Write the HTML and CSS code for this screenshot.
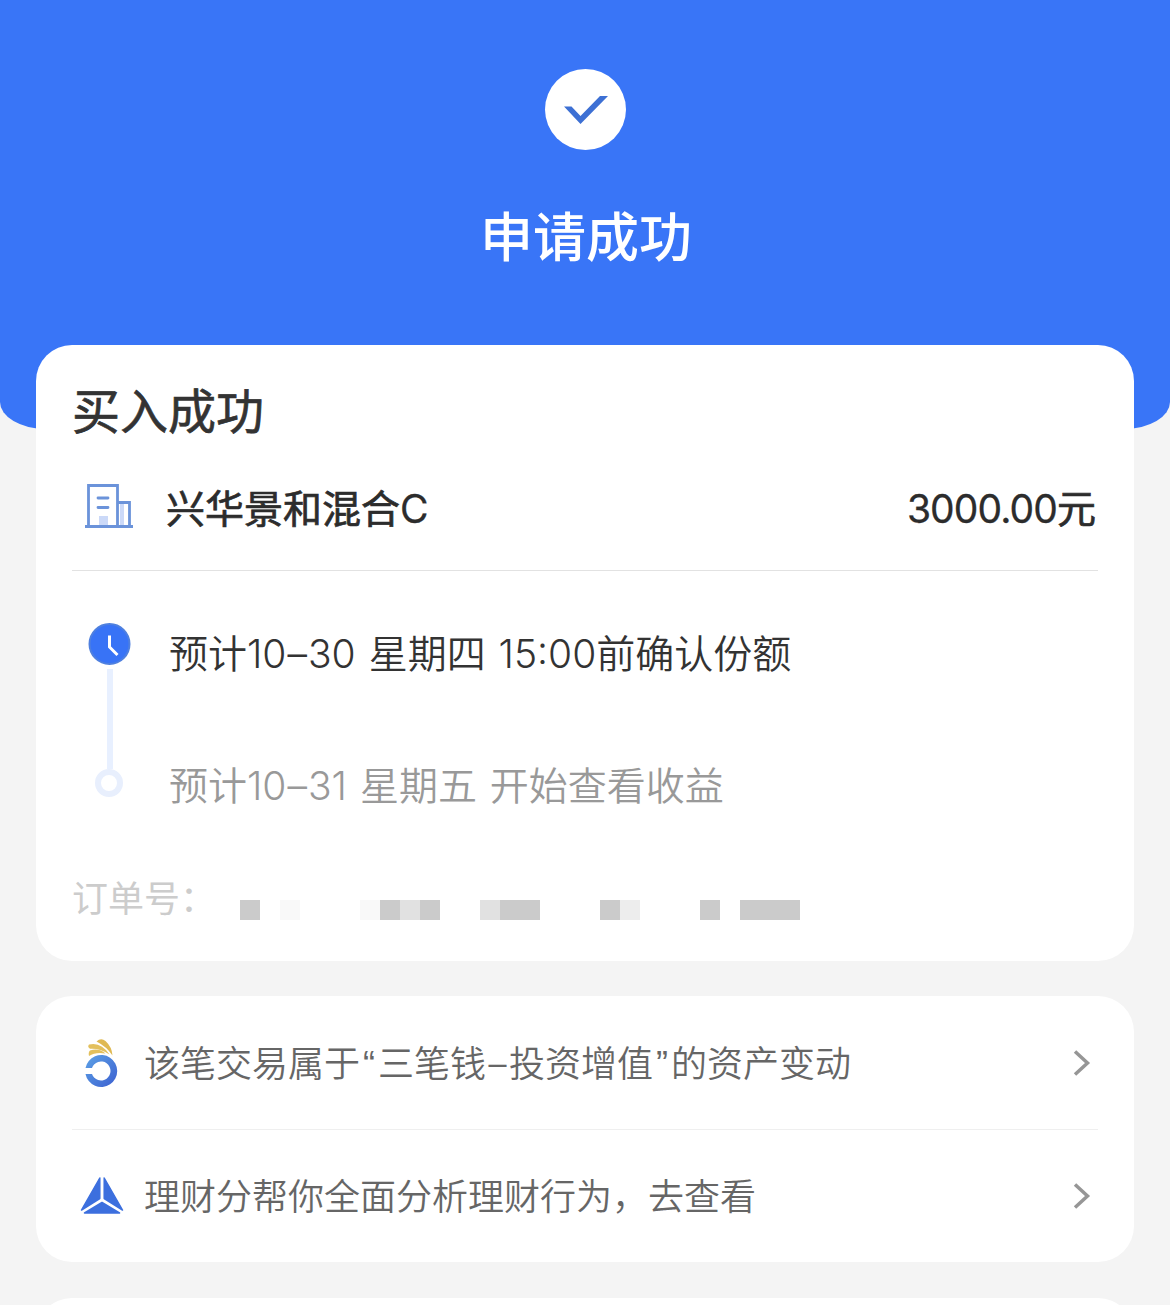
FILE: index.html
```html
<!DOCTYPE html>
<html lang="zh-CN">

<head>
    <meta charset="utf-8">
    <title>申请成功</title>
    <link rel="stylesheet" href="styles.css">
</head>

<body>
    <div class="page">
        <div class="hero">
            <svg class="hero-icon" width="82" height="82" viewBox="0 0 82 82">
                <circle cx="41.500" cy="40.500" r="40.500" fill="#fff" />
                <path d="M20 37.500h7.500l9 9.500L56 27h8L36.500 55z" fill="#3d70d4" />
            </svg>
            <h1 class="hero-title">申请成功</h1>
        </div>

        <div class="card order">
            <h2 class="order-title">买入成功</h2>
            <div class="fund">
                <svg class="fund-icon" width="50" height="46" viewBox="0 0 50 46">
                    <path d="M15 33h9v10h-9zM36 20h4v23h-4z" fill="#cbd9f8" />
                    <path d="M4.500 43V2.500h29V43M34 19.500h11.500V43M1 43.500h48" fill="none" stroke="#6b93da" stroke-width="2.800" />
                    <path d="M14 15h10M14 24.500h10" stroke="#6b93da" stroke-width="2.800" stroke-linecap="round" />
                </svg>
                <span class="fund-name">兴华景和混合<span class="latin">C</span></span>
                <span class="fund-amount"><span class="latin digits">3000.00</span>元</span>
            </div>
            <div class="steps">
                <div class="track">
                    <svg width="44" height="44" viewBox="0 0 44 44">
                        <circle cx="21.500" cy="22" r="20" fill="#3873f6" stroke="#4f80df" stroke-width="2" />
                        <path d="M21.500 13.500v11.500l8 8" fill="none" stroke="#fff" stroke-width="3" />
                    </svg>
                    <div class="track-line"></div>
                    <div class="track-dot"></div>
                </div>
                <div class="step-list">
                    <div class="step">预计10<span class="dash">–</span>30 星期四 15:00前确认份额</div>
                    <div class="step step-next">预计10<span class="dash">–</span>31 星期五 开始查看收益</div>
                </div>
            </div>
            <div class="number">
                <span class="number-label">订单号：</span>
                <div class="mask">
                    <i class="dark"></i><i></i><i class="faint"></i><i></i><i></i><i></i><i class="faint"></i>
                    <i class="dark"></i><i class="mid"></i><i class="dark"></i><i></i><i></i><i class="mid"></i><i class="dark"></i>
                    <i class="dark"></i><i></i><i></i><i></i><i class="dark"></i><i class="light"></i><i></i>
                    <i></i><i></i><i class="dark"></i><i></i><i class="dark"></i><i class="dark"></i><i class="dark"></i>
                </div>
            </div>
        </div>

        <div class="card links">
            <div class="link">
                <svg class="link-icon" width="44" height="50" viewBox="0 0 44 50">
                    <defs>
                        <linearGradient id="ring" x1="0" y1="0" x2="1" y2="1">
                            <stop offset="0" stop-color="#5da2e6" />
                            <stop offset="1" stop-color="#3b5fd0" />
                        </linearGradient>
                    </defs>
                    <path d="M5.500 30A16 16 0 1 1 5.500 36H12A9.500 9.500 0 1 0 12 30z" fill="url(#ring)" />
                    <path d="M16.500 3.500Q21 -.5 25.500 3Q32 9 32.500 17.500Q26.500 8.500 16.500 3.500z" fill="#dfb953" />
                    <path d="M9 6.500Q21 3.500 29.500 16.500Q20 10 10 10.800Q7 9 9 6.500z" fill="#e3c05d" />
                    <path d="M10 12.500Q19 9.500 25.500 15.500Q15 14 9 18Q8 14.500 10 12.500z" fill="#e3c05d" />
                </svg>
                <span class="link-text">该笔交易属于<span class="quote">“</span>三笔钱<span class="dash">–</span>投资增值<span class="quote">”</span>的资产变动</span>
                <svg class="arrow" width="18" height="26" viewBox="0 0 18 26">
                    <path d="M2 1.500L14.500 13L2 24.500" fill="none" stroke="#969696" stroke-width="3.500" />
                </svg>
            </div>
            <div class="link">
                <svg class="link-icon" width="44" height="38" viewBox="0 0 44 38">
                    <path d="M19.800 1V21.500L1.500 33zM24.200 1V21.500L42.500 33zM22 25.500L39.500 36h-35z" fill="#3c6fde" stroke="#3c6fde" stroke-width="1.500" stroke-linejoin="round" />
                </svg>
                <span class="link-text">理财分帮你全面分析理财行为，去查看</span>
                <svg class="arrow" width="18" height="26" viewBox="0 0 18 26">
                    <path d="M2 1.500L14.500 13L2 24.500" fill="none" stroke="#969696" stroke-width="3.500" />
                </svg>
            </div>
        </div>

        <div class="card more"></div>
    </div>
</body>

</html>
```
FILE: styles.css
```css
* {
    box-sizing: border-box;
}

body {
    margin: 0;
    background: #f4f4f4;
    color: #333;
    font-family: Inter, "Noto Sans CJK SC", sans-serif;
}

h1,
h2 {
    margin: 0;
}

.page {
    height: 1305px;
    overflow: hidden;
}

.hero {
    display: flex;
    flex-direction: column;
    align-items: center;
    height: 429px;
    padding-top: 69px;
    background: #3975f7;
    border-radius: 0 0 46px 46px / 0 0 27px 27px;
}

.hero-title {
    margin-top: 52px;
    padding-left: 2px;
    font-size: 53px;
    font-weight: 500;
    line-height: 70px;
    color: #fff;
}

.card {
    position: relative;
    margin: 0 36px 36px;
    padding: 0 36px;
    background: #fff;
    border-radius: 36px;
}

.order {
    height: 616px;
    margin-top: -84px;
    margin-bottom: 35px;
    padding-top: 37px;
}

.order-title {
    font-size: 48px;
    font-weight: 400;
    line-height: 60px;
    -webkit-text-stroke: 0.7px #333;
}

.fund {
    display: flex;
    align-items: center;
    height: 129px;
    padding: 0 2px 0 12px;
    border-bottom: 1px solid #e2e2e2;
    font-size: 39px;
    font-weight: 400;
    color: #2c2c2c;
    -webkit-text-stroke: 0.7px #2c2c2c;
}

.fund-name {
    flex: 1;
    margin-left: 32px;
}

.latin {
    -webkit-text-stroke: 0.3px #2c2c2c;
}

.digits {
    letter-spacing: -0.9px;
}

.steps {
    display: flex;
    height: 262px;
    padding-top: 51px;
}

.track {
    display: flex;
    flex-direction: column;
    align-items: center;
    width: 44px;
    margin: 0 37px 0 16px;
}

.track-line {
    width: 6px;
    height: 100px;
    margin-top: 3px;
    background: #e8f0ff;
}

.track-dot {
    width: 28px;
    height: 28px;
    margin-right: 3px;
    border: 6px solid #e8effd;
    border-radius: 50%;
}

.step {
    height: 132px;
    font-size: 39px;
    font-weight: 350;
    line-height: 64px;
    word-spacing: 2px;
}

.step-next {
    color: #999;
}

.number {
    display: flex;
    align-items: center;
    height: 130px;
}

.number-label {
    width: 168px;
    padding-bottom: 4px;
    font-size: 36px;
    color: #ccc;
}

.mask {
    display: grid;
    grid-template-columns: repeat(28, 20px);
    grid-auto-rows: 20px;
    margin-top: 24px;
}

.dark {
    background: #cbcbcb;
}

.mid {
    background: #e1e1e1;
}

.light {
    background: #ededed;
}

.faint {
    background: #f9f9f9;
}

.links {
    height: 266px;
}

.link {
    display: flex;
    align-items: center;
    height: 133px;
    padding: 0 7px 0 8px;
}

.link + .link {
    border-top: 1px solid #efefef;
}

.link-text {
    flex: 1;
    margin-left: 20px;
    padding-bottom: 4px;
    font-size: 36px;
    font-weight: 350;
    color: #666;
}

.quote {
    padding: 0 3px;
    font-family: "Liberation Sans", sans-serif;
}

.dash {
    padding: 0 1px;
}

.link-text .dash {
    padding: 0 2.5px;
}

.more {
    height: 100px;
    margin-bottom: 0;
}
```
